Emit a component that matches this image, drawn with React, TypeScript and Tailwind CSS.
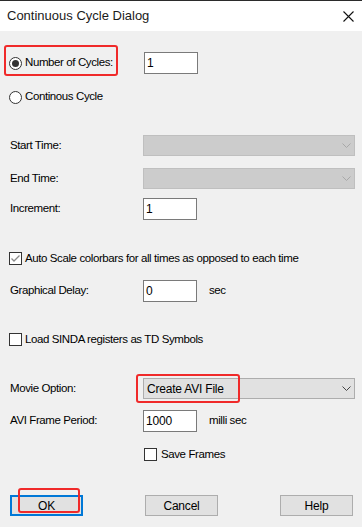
import React from "react";

const font = { fontFamily: '"Liberation Sans", Arial, sans-serif' };

function Radio({ checked }: { checked?: boolean }) {
  return (
    <span className="w-[13px] h-[13px] rounded-full border border-[#333] bg-white flex items-center justify-center shrink-0">
      {checked && <span className="w-[7px] h-[7px] rounded-full bg-[#333]" />}
    </span>
  );
}

function Check({ checked }: { checked?: boolean }) {
  return (
    <span className="w-[13px] h-[13px] border border-[#333] bg-white flex items-center justify-center shrink-0">
      {checked && (
        <svg width="11" height="11" viewBox="0 0 11 11">
          <path d="M1.5 5.5 L4 8 L9.5 2.5" fill="none" stroke="#8a8a8a" strokeWidth="1.3" />
        </svg>
      )}
    </span>
  );
}

function Chevron({ color }: { color: string }) {
  return (
    <svg width="9" height="5" viewBox="0 0 9 5" className="mr-[3px]">
      <path d="M0.5 0.5 L4.5 4.5 L8.5 0.5" fill="none" stroke={color} strokeWidth="1" />
    </svg>
  );
}

function TextBox({ value }: { value: string }) {
  return (
    <div className="w-[54px] h-[22px] bg-white border border-[#7a7a7a] pl-[2px] flex items-center text-black text-[12px] tracking-[-0.2px]">
      {value}
    </div>
  );
}

function Label({ children }: { children: React.ReactNode }) {
  return <span className="w-[134px] pl-[1px] shrink-0">{children}</span>;
}

function Btn({ children, focused }: { children: React.ReactNode; focused?: boolean }) {
  return (
    <div
      className={
        "w-[73px] h-[21px] bg-[#e1e1e1] flex items-center justify-center " +
        (focused ? "border-2 border-[#0078d7]" : "border border-[#adadad]")
      }
    >
      {children}
    </div>
  );
}

export default function App() {
  return (
    <div className="w-[362px] h-[527px] bg-[#f0f0f0] flex flex-col text-black" style={font}>
      {/* title bar */}
      <div className="h-[31px] bg-white border-t border-[#2b2b2b] flex items-center justify-between pl-[7px] pr-[7px] shrink-0">
        <span className="text-[13px] text-[#1a1a1a]">Continuous Cycle Dialog</span>
        <svg width="11" height="11" viewBox="0 0 11 11" className="mr-[1px]">
          <path d="M0.5 0.5 L10.5 10.5 M10.5 0.5 L0.5 10.5" stroke="#111" strokeWidth="1.1" />
        </svg>
      </div>

      <div className="flex flex-col pl-[9px] text-[11.5px] tracking-[-0.4px]">
        {/* Number of Cycles */}
        <div className="mt-[21px] h-[22px] flex items-center">
          <div className="w-[135px] relative flex items-center gap-[3px]">
            <Radio checked />
            <span>Number of Cycles:</span>
            <span className="absolute left-[-5px] top-[-9px] w-[114px] h-[31px] border-2 border-[#f02a2a] rounded-[3px]" />
          </div>
          <TextBox value="1" />
        </div>

        <div className="mt-[16px] h-[14px] flex items-center gap-[3px]">
          <Radio />
          <span>Continous Cycle</span>
        </div>

        {/* times */}
        <div className="mt-[31px] h-[21px] flex items-center">
          <Label>Start Time:</Label>
          <div className="w-[212px] h-[21px] bg-[#cccccc] border border-[#bfbfbf] flex items-center justify-end">
            <Chevron color="#a8a8a8" />
          </div>
        </div>
        <div className="mt-[12px] h-[21px] flex items-center">
          <Label>End Time:</Label>
          <div className="w-[212px] h-[21px] bg-[#cccccc] border border-[#bfbfbf] flex items-center justify-end">
            <Chevron color="#a8a8a8" />
          </div>
        </div>
        <div className="mt-[9px] h-[22px] flex items-center">
          <Label>Increment:</Label>
          <TextBox value="1" />
        </div>

        {/* auto scale */}
        <div className="mt-[32px] h-[13px] flex items-center gap-[3px]">
          <Check checked />
          <span>Auto Scale colorbars for all times as opposed to each time</span>
        </div>

        <div className="mt-[15px] h-[22px] flex items-center">
          <Label>Graphical Delay:</Label>
          <TextBox value="0" />
          <span className="ml-[12px]">sec</span>
        </div>

        <div className="mt-[31px] h-[13px] flex items-center gap-[3px]">
          <Check />
          <span>Load SINDA registers as TD Symbols</span>
        </div>

        {/* movie */}
        <div className="mt-[32px] h-[21px] flex items-center">
          <Label>Movie Option:</Label>
          <div className="relative w-[212px] h-[21px] bg-[#e1e1e1] border border-[#adadad] flex items-center justify-between pl-[3px] text-[12px] tracking-[-0.2px]">
            <span>Create AVI File</span>
            <Chevron color="#444" />
            <span className="absolute left-[-8px] top-[-5px] w-[104px] h-[29px] border-2 border-[#f02a2a] rounded-[3px]" />
          </div>
        </div>
        <div className="mt-[11px] h-[22px] flex items-center">
          <Label>AVI Frame Period:</Label>
          <TextBox value="1000" />
          <span className="ml-[12px]">milli sec</span>
        </div>
        <div className="mt-[16px] h-[13px] flex items-center gap-[4px] pl-[135px]">
          <Check />
          <span>Save Frames</span>
        </div>

        {/* buttons */}
        <div className="mt-[34px] h-[21px] flex items-center pl-[1px] gap-[62px] text-[12px] tracking-[-0.2px]">
          <div className="relative">
            <Btn focused>OK</Btn>
            <span className="absolute left-[8px] top-[-7px] w-[62px] h-[25px] border-2 border-[#f02a2a] rounded-[3px]" />
          </div>
          <Btn>Cancel</Btn>
          <Btn>Help</Btn>
        </div>
      </div>
    </div>
  );
}
